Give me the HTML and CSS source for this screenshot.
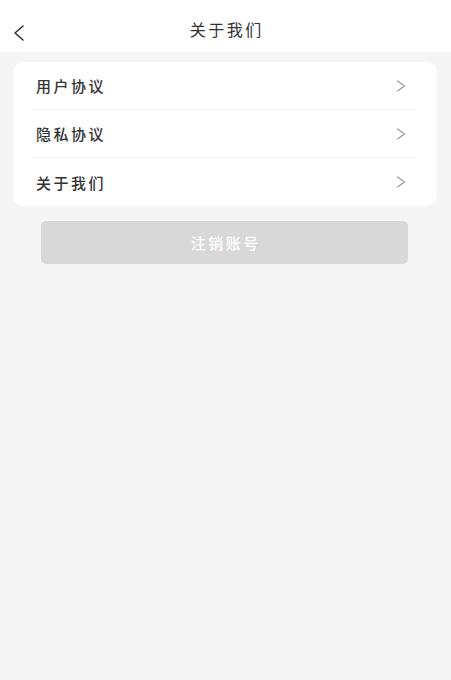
FILE: index.html
```html
<!DOCTYPE html>
<html lang="zh-CN">
<head>
<meta charset="utf-8">
<title>关于我们</title>
<link rel="stylesheet" href="styles.css">
</head>
<body>
<div class="page">
  <header class="nav">
    <span class="back">
      <svg width="12" height="16" viewBox="0 0 12 16"><path d="M10 1 L2 8 L10 15" fill="none" stroke="#333" stroke-width="1.6" stroke-linecap="round" stroke-linejoin="round"/></svg>
    </span>
    <h1 class="title">关于我们</h1>
  </header>
  <main class="content">
    <section class="card">
      <div class="row"><span class="label">用户协议</span><svg class="arrow" width="10" height="12" viewBox="0 0 10 12"><path d="M1.5 1 L8.5 6 L1.5 11" fill="none" stroke="#9a9a9a" stroke-width="1.2" stroke-linecap="round" stroke-linejoin="round"/></svg></div>
      <div class="row"><span class="label">隐私协议</span><svg class="arrow" width="10" height="12" viewBox="0 0 10 12"><path d="M1.5 1 L8.5 6 L1.5 11" fill="none" stroke="#9a9a9a" stroke-width="1.2" stroke-linecap="round" stroke-linejoin="round"/></svg></div>
      <div class="row"><span class="label">关于我们</span><svg class="arrow" width="10" height="12" viewBox="0 0 10 12"><path d="M1.5 1 L8.5 6 L1.5 11" fill="none" stroke="#9a9a9a" stroke-width="1.2" stroke-linecap="round" stroke-linejoin="round"/></svg></div>
    </section>
    <button class="logout" type="button">注销账号</button>
  </main>
</div>
</body>
</html>
```

FILE: styles.css
```css
* { box-sizing: border-box; }
html, body {
  margin: 0;
  padding: 0;
  height: 100%;
  background: #f5f5f5;
  font-family: "Noto Sans CJK SC", "Noto Sans", sans-serif;
  color: #333;
}
.page {
  min-height: 680px;
  display: flex;
  flex-direction: column;
}
.nav {
  height: 52px;
  background: #fff;
  position: relative;
  display: flex;
  align-items: center;
  justify-content: center;
  padding-top: 6px;
}
.back {
  position: absolute;
  left: 13px;
  top: 25px;
  display: flex;
}
.title {
  margin: 0;
  font-size: 16px;
  font-weight: 400;
  letter-spacing: 2.5px;
  margin-right: -2.5px;
  color: #333;
}
.content {
  padding: 10px 14px 0 13px;
  display: flex;
  flex-direction: column;
}
.card {
  background: #fff;
  border-radius: 10px;
  padding: 0 20px 0 19px;
}
.row {
  height: 48px;
  display: flex;
  align-items: center;
  justify-content: space-between;
  border-bottom: 1px solid #f3f3f3;
  padding: 0 11px 0 4px;
}
.row:last-child { border-bottom: none; }
.label {
  font-size: 15px;
  font-weight: 500;
  letter-spacing: 2.5px;
  color: #333;
}
.arrow { display: block; }
.logout {
  margin: 15px 29px 0 28px;
  height: 43px;
  border: none;
  border-radius: 5px;
  background: #d8d8d8;
  color: #fff;
  font-family: "Noto Sans CJK SC", "Noto Sans", sans-serif;
  font-size: 15px;
  font-weight: 500;
  letter-spacing: 2.5px;
  padding: 0 0 0 2.5px;
}
```
